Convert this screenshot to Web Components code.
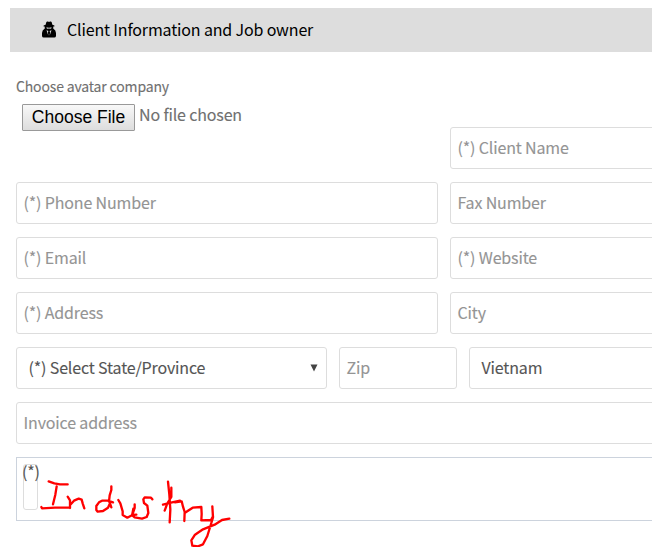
<!DOCTYPE html>
<html lang="en">
<head>
<meta charset="utf-8">
<title>Client Information</title>
<style>
html,body{margin:0;height:547px;overflow:hidden;background:#fff}
body{font-family:"Noto Sans CJK SC","Noto Sans",sans-serif;font-size:16px;letter-spacing:-.155px;-webkit-text-stroke:.12px currentColor;color:#555}
</style>
</head>
<body>
<client-form></client-form>
<script>
const define = (name, html) => customElements.define(name, class extends HTMLElement {
  constructor() {
    super();
    this.attachShadow({mode: 'open'}).innerHTML = html;
  }
});

define('section-header', `<style>
:host{display:flex;align-items:center;height:44px;box-sizing:border-box;background:#ddd;color:#000;padding-left:32px;-webkit-text-stroke:0}
svg{display:block;width:14px;height:17px;margin:-2px 11px 0 0}
span{line-height:24px;padding-bottom:2px;white-space:nowrap}
</style>
<svg viewBox="0 0 14 17"><path d="M3.6 3.8 4.3 1.2Q4.8 0 6 .6L7 .9 8 .6Q9.2 0 9.7 1.2L10.4 3.8 12.4 4.4V5.6H11.3L11.2 7.4Q14 9 14 12V15Q13.8 16.6 12.3 16.6H1.7Q.2 16.6 0 15V12Q0 9 2.8 7.4L2.7 5.6H1.6V4.4Z"/><path fill="#ddd" d="M4.4 6.4H6L6.6 6.8H7.4L8 6.4H9.6V7.1L8.6 7.8 7 7.4 5.4 7.8 4.4 7.1ZM4.5 9.2 6.4 10 5.9 11.5 6.4 14.8ZM9.5 9.2 7.6 10 8.1 11.5 7.6 14.8Z"/></svg>
<span><slot></slot></span>`);

define('form-field', `<style>
:host{display:flex;align-items:center;box-sizing:border-box;height:42px;border:1px solid #ddd;border-radius:3px;padding:0 6.5px 2px;color:#949494;background:#fff;min-width:0;line-height:24px;white-space:nowrap}
</style><slot></slot>`);

define('form-select', `<style>
:host{display:flex;align-items:center;justify-content:space-between;box-sizing:border-box;height:42px;border:1px solid #ddd;border-radius:3px;padding:0 8px 0 11.5px;color:#555;background:#fff;min-width:0;line-height:24px;white-space:nowrap}
span{padding-bottom:2px}
svg{display:block;width:8px;height:8px}
</style><span><slot></slot></span><svg viewBox="0 0 8 8"><path fill="#444" d="M.5.5H7.5L4 7.5Z"/></svg>`);

define('file-picker', `<style>
:host{display:flex;flex-direction:column;height:82px}
.label{font-size:14px;line-height:18px;height:27px;color:#707070;white-space:nowrap}
.row{display:flex;margin-left:6px;color:#707070}
button{display:block;box-sizing:border-box;width:113px;height:27px;padding:1px 0 0;border:1px solid #999;border-radius:1px;background:linear-gradient(#f8f8f8,#ddd);font:17.5px/23px "Liberation Sans",sans-serif;letter-spacing:0;-webkit-text-stroke:0;color:#000;white-space:nowrap}
button span{display:block;height:24px}
.status{margin-left:4px;line-height:20px;white-space:nowrap}
</style>
<div class="label"><slot></slot></div>
<div class="row"><button type="button"><span>Choose File</span></button><span class="status">No file chosen</span></div>`);

define('industry-box', `<style>
:host{display:block;position:relative;box-sizing:border-box;height:64px;border:1px solid #ccd3dd;border-right:0;padding:6px}
.slot{box-sizing:border-box;width:15px;height:46px;border:1px solid #ddd;border-radius:3px;line-height:12px;color:#555;white-space:nowrap}
.slot span{margin-left:-2px}
svg{position:absolute;left:-17px;top:-18px;width:250px;height:108px;overflow:visible}
</style>
<div class="slot"><span><slot></slot></span></div>
<svg viewBox="0 0 750 324" fill="none" stroke="#ff0000" stroke-width="7" stroke-linecap="round" stroke-linejoin="round" role="img" aria-label="Industry">
<path d="M146 124 163 130 180 133H203M170 139 166 164 159 193M124 201 126 205 165 203 207 202M203 170 210 181V204M211 194 222 182 236 176 245 179 248 190 253 205"/>
<path d="M334 139V150L329 166 327 185M339 187 323 182H306L297 187 289 198V210L293 215 309 213 324 203 330 190 334 202M355 180 361 190 368 214V225L382 233 397 225 404 204V193M400 206 397 222"/>
<path d="M457 178 453 173 434 172 430 178 432 189 442 197 445 219 440 231 426 236 404 232 396 225 409 224M504 125 508 163 511 209 509 247M514 143V171L502 190 494 212M489 194 516 187 540 182M525 187 545 184 549 200 554 216 553 243M555 218 578 203 604 201 605 222 604 241 633 240 639 229M637 199 639 232 634 249 622 288 609 313 594 319 577 317 574 301 585 284 609 268 644 254 666 240 688 236"/>
</svg>`);

define('client-form', `<style>
:host{display:block;width:652px;height:547px;box-sizing:border-box;padding-top:8px;overflow:hidden}
section-header{margin-left:10px}
.fields{display:flex;flex-direction:column;gap:13px;margin-left:16px;padding-top:25px}
.pair{display:grid;grid-template-columns:422px 230px;column-gap:12px;height:42px}
.top{height:92px}
.top form-field{align-self:end}
.triple{display:grid;grid-template-columns:311px 118px 220px;column-gap:12px}
.wide{width:660px}
</style>
<section-header>Client Information and Job owner</section-header>
<div class="fields">
<div class="pair top"><file-picker>Choose avatar company</file-picker><form-field>(*) Client Name</form-field></div>
<div class="pair"><form-field>(*) Phone Number</form-field><form-field>Fax Number</form-field></div>
<div class="pair"><form-field>(*) Email</form-field><form-field>(*) Website</form-field></div>
<div class="pair"><form-field>(*) Address</form-field><form-field>City</form-field></div>
<div class="triple"><form-select>(*) Select State/Province</form-select><form-field>Zip</form-field><form-select>Vietnam</form-select></div>
<form-field class="wide">Invoice address</form-field>
<industry-box>(*)</industry-box>
</div>`);
</script>
</body>
</html>
